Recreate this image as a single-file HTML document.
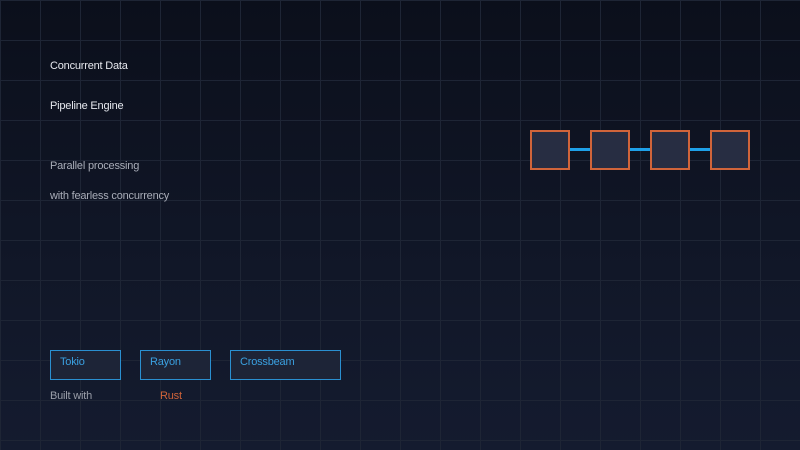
<!DOCTYPE html>
<html><head><style>
body{margin:0;width:800px;height:450px;overflow:hidden;font-family:"Liberation Sans",sans-serif;
background:linear-gradient(180deg,#0b0f1b 0%,#111728 60%,#141b2f 100%);position:relative}
.grid{position:absolute;inset:0;background-image:linear-gradient(to right,#1e2535 1px,transparent 1px),linear-gradient(to bottom,#1e2535 1px,transparent 1px);background-size:40px 40px;background-position:0 0}
.t{position:absolute;font-size:11px;white-space:nowrap;line-height:1;letter-spacing:-0.2px}
.b{position:absolute;top:130px;width:36px;height:36px;border:2px solid #d0643a;background:#272d42}
.l{position:absolute;top:148px;height:3px;width:20px;background:#1ea0e8}
.tag{position:absolute;top:350px;height:28px;border:1px solid #2a8fd0;background:#1d2437;color:#3aa0e0;font-size:11px;letter-spacing:-0.2px}
.tag span{position:absolute;left:9px;top:5px}
</style></head><body>
<div class="grid"></div>
<div class="t" style="left:50px;top:61px;color:#e6e8ee">Concurrent Data</div>
<div class="t" style="left:50px;top:101px;color:#e6e8ee">Pipeline Engine</div>
<div class="t" style="left:50px;top:161px;color:#a9adb8">Parallel processing</div>
<div class="t" style="left:50px;top:191px;color:#a9adb8">with fearless concurrency</div>
<div class="l" style="left:570px"></div><div class="l" style="left:630px"></div><div class="l" style="left:690px"></div>
<div class="b" style="left:530px"></div><div class="b" style="left:590px"></div><div class="b" style="left:650px"></div><div class="b" style="left:710px"></div>
<div class="tag" style="left:50px;width:69px"><span>Tokio</span></div>
<div class="tag" style="left:140px;width:69px"><span>Rayon</span></div>
<div class="tag" style="left:230px;width:109px"><span>Crossbeam</span></div>
<div class="t" style="left:50px;top:391px;color:#9a9ea9">Built with</div>
<div class="t" style="left:160px;top:391px;color:#d0643a">Rust</div>
</body></html>
